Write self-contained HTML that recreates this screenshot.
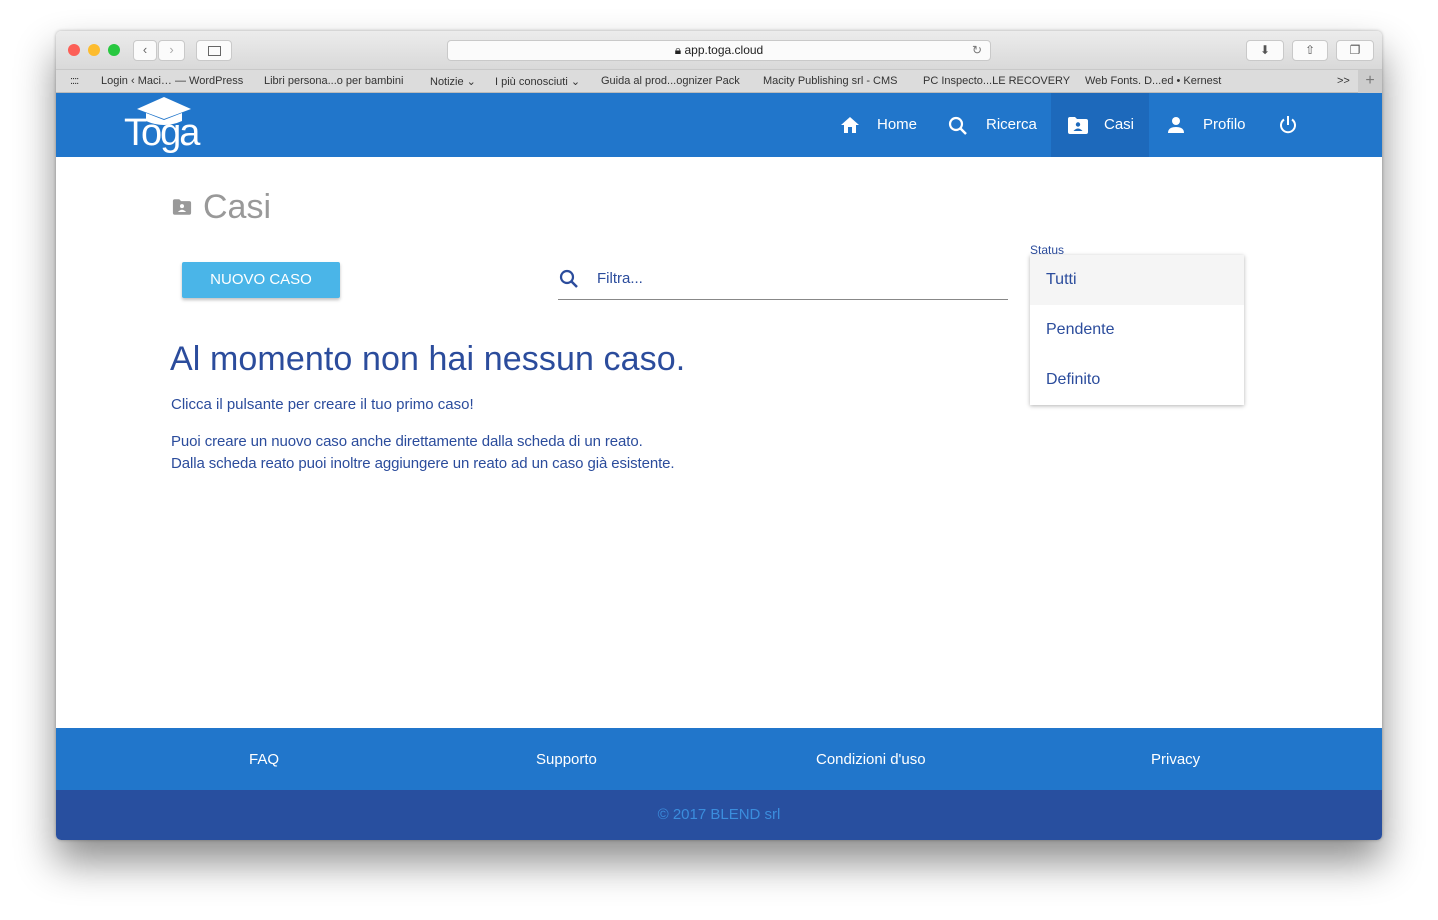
<!DOCTYPE html>
<html><head><meta charset="utf-8"><style>
*{margin:0;padding:0;box-sizing:border-box}
body{width:1438px;height:920px;background:#fff;font-family:"Liberation Sans",sans-serif;position:relative;overflow:hidden}
.win{position:absolute;left:56px;top:31px;width:1326px;height:809px;border-radius:5px;overflow:hidden;box-shadow:0 22px 40px rgba(0,0,0,.45),0 0 3px rgba(0,0,0,.3);background:#fff}
.tb{position:absolute;left:0;top:0;width:100%;height:38px;background:linear-gradient(#ececec,#d9d9d9)}
.bm{position:absolute;left:0;top:38px;width:100%;height:24px;background:#dcdcdc;border-top:1px solid #c8c8c8;border-bottom:1px solid #bbb;font-size:11px;color:#333}
.bm span{position:absolute;top:5px}
.dot{position:absolute;top:13px;width:12px;height:12px;border-radius:50%}
.btn{position:absolute;top:9px;height:21px;background:#fbfbfb;border:1px solid #c9c9c9;border-radius:4px}
.a{position:absolute}
.nav{position:absolute;left:0;top:62px;width:100%;height:64px;background:#2176cb}
.nav .t{position:absolute;top:23px;color:#fff;font-size:15px}
.blue{color:#2b4c9c}
</style></head><body>
<div class="win">
 <div class="tb">
  <div class="dot" style="left:12px;background:#fc5f57"></div>
  <div class="dot" style="left:32px;background:#fdbc2e"></div>
  <div class="dot" style="left:52px;background:#28c840"></div>
  <div class="btn" style="left:77px;width:24px;font-size:13px;color:#666;text-align:center;line-height:18px">&#8249;</div>
  <div class="btn" style="left:102px;width:27px;font-size:13px;color:#aaa;text-align:center;line-height:18px">&#8250;</div>
  <div class="btn" style="left:140px;width:36px"><div class="a" style="left:11px;top:5px;width:13px;height:10px;border:1px solid #666"></div></div>
  <div class="btn" style="left:391px;width:544px;text-align:center;font-size:12px;line-height:19px;color:#222">&#x1F512;&#xFE0E; app.toga.cloud<span style="position:absolute;right:8px;color:#777">&#8635;</span></div>
  <div class="btn" style="left:1190px;width:38px;text-align:center;line-height:18px;font-size:12px;color:#555">&#11015;</div>
  <div class="btn" style="left:1236px;width:36px;text-align:center;line-height:18px;font-size:12px;color:#555">&#8679;</div>
  <div class="btn" style="left:1280px;width:38px;text-align:center;line-height:18px;font-size:12px;color:#555">&#10064;</div>
 </div>
 <div class="bm">
  <span style="left:14px;letter-spacing:-1px">:::: </span>
  <span style="left:45px">Login ‹ Maci… — WordPress</span>
  <span style="left:208px">Libri persona...o per bambini</span>
  <span style="left:374px">Notizie ⌄</span>
  <span style="left:439px">I più conosciuti ⌄</span>
  <span style="left:545px">Guida al prod...ognizer Pack</span>
  <span style="left:707px">Macity Publishing srl - CMS</span>
  <span style="left:867px">PC Inspecto...LE RECOVERY</span>
  <span style="left:1029px">Web Fonts. D...ed • Kernest</span>
  <span style="left:1281px">&gt;&gt;</span>
  <span style="left:1302px;top:0;width:24px;height:23px;background:#ccc;text-align:center;font-size:16px;line-height:22px;color:#777">+</span>
 </div>
 <div class="nav">
  <svg class="a" style="left:68px;top:2px" width="82" height="60" viewBox="0 0 82 60"><polygon points="40,2 67,14 40,24 13,14" fill="#fff"/><path d="M22,18 v8 q18,8 36,0 v-8 l-18,7z" fill="#fff"/><text x="0" y="50" font-family="Liberation Sans" font-size="38" fill="#fff" letter-spacing="-2">Toga</text></svg>
  <svg class="a" style="left:784px;top:23px" width="20" height="18" viewBox="0 0 20 18"><path d="M10 1 L1 9 H4 V17 H8 V11 H12 V17 H16 V9 H19Z" fill="#fff"/></svg>
  <div class="t" style="left:821px">Home</div>
  <svg class="a" style="left:892px;top:23px" width="20" height="20" viewBox="0 0 20 20"><circle cx="8" cy="8" r="6" stroke="#fff" stroke-width="2.2" fill="none"/><path d="M12.5 12.5 L18 18" stroke="#fff" stroke-width="2.5"/></svg>
  <div class="t" style="left:930px">Ricerca</div>
  <div class="a" style="left:995px;top:0;width:98px;height:64px;background:#1d69bb"></div>
  <svg class="a" style="left:1011px;top:24px" width="22" height="17" viewBox="0 0 22 17"><path d="M1 2 Q1 0 3 0 H8 L10 2 H19 Q21 2 21 4 V15 Q21 17 19 17 H3 Q1 17 1 15Z" fill="#fff"/><circle cx="11" cy="7.5" r="2.2" fill="#1d69bb"/><path d="M6.5 14 Q11 9 15.5 14Z" fill="#1d69bb"/></svg>
  <div class="t" style="left:1048px">Casi</div>
  <svg class="a" style="left:1111px;top:23px" width="18" height="18" viewBox="0 0 18 18"><circle cx="9" cy="5" r="4" fill="#fff"/><path d="M1 17 Q1 11 9 11 Q17 11 17 17Z" fill="#fff"/></svg>
  <div class="t" style="left:1147px">Profilo</div>
  <svg class="a" style="left:1222px;top:22px" width="20" height="20" viewBox="0 0 20 20"><path d="M6 4.5 A7 7 0 1 0 14 4.5" stroke="#fff" stroke-width="2" fill="none"/><path d="M10 1 V10" stroke="#fff" stroke-width="2"/></svg>
 </div>
 <svg class="a" style="left:116px;top:168px" width="20" height="16" viewBox="0 0 22 17"><path d="M1 2 Q1 0 3 0 H8 L10 2 H19 Q21 2 21 4 V15 Q21 17 19 17 H3 Q1 17 1 15Z" fill="#999"/><circle cx="11" cy="7.5" r="2.2" fill="#fff"/><path d="M6.5 14 Q11 9 15.5 14Z" fill="#fff"/></svg>
 <div class="a" style="left:147px;top:157px;font-size:34px;color:#999">Casi</div>
 <div class="a" style="left:126px;top:231px;width:158px;height:36px;background:#4ab5e8;color:#fff;font-size:15px;text-align:center;line-height:36px;box-shadow:0 2px 3px rgba(0,0,0,.25);border-radius:2px">NUOVO CASO</div>
 <svg class="a" style="left:503px;top:238px" width="20" height="20" viewBox="0 0 20 20"><circle cx="8" cy="8" r="6" stroke="#2b4c9c" stroke-width="2.2" fill="none"/><path d="M12.5 12.5 L18 18" stroke="#2b4c9c" stroke-width="2.5"/></svg>
 <div class="a blue" style="left:541px;top:239px;font-size:15px">Filtra...</div>
 <div class="a" style="left:502px;top:268px;width:450px;height:1px;background:#888"></div>
 <div class="a blue" style="left:974px;top:212px;font-size:12px">Status</div>
 <div class="a" style="left:974px;top:224px;width:214px;height:150px;background:#fff;box-shadow:0 1px 4px rgba(0,0,0,.3)">
  <div style="height:50px;background:#f5f5f5;padding:16px 16px;font-size:16px" class="blue">Tutti</div>
  <div style="height:50px;padding:16px 16px;font-size:16px" class="blue">Pendente</div>
  <div style="height:50px;padding:16px 16px;font-size:16px" class="blue">Definito</div>
 </div>
 <div class="a blue" style="left:114px;top:309px;font-size:34px;letter-spacing:0.1px">Al momento non hai nessun caso.</div>
 <div class="a blue" style="left:115px;top:365px;font-size:15px">Clicca il pulsante per creare il tuo primo caso!</div>
 <div class="a blue" style="left:115px;top:400px;font-size:15px;line-height:22px;letter-spacing:-0.1px">Puoi creare un nuovo caso anche direttamente dalla scheda di un reato.<br>Dalla scheda reato puoi inoltre aggiungere un reato ad un caso già esistente.</div>
 <div class="a" style="left:0;top:697px;width:100%;height:62px;background:#2176cb;color:#fff;font-size:15px">
  <div class="a" style="left:193px;top:23px">FAQ</div>
  <div class="a" style="left:480px;top:23px">Supporto</div>
  <div class="a" style="left:760px;top:23px">Condizioni d'uso</div>
  <div class="a" style="left:1095px;top:23px">Privacy</div>
 </div>
 <div class="a" style="left:0;top:759px;width:100%;height:50px;background:#284f9f;color:#3b8ddd;font-size:15px;text-align:center;line-height:50px">© 2017 BLEND srl</div>
</div>
</body></html>
